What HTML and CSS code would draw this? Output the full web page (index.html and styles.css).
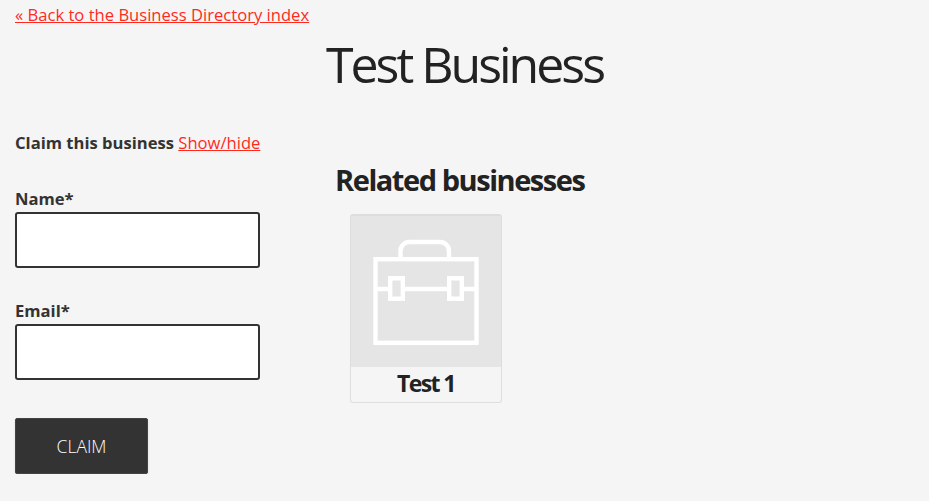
FILE: index.html
```html
<!DOCTYPE html>
<html lang="en">
<head>
    <meta charset="UTF-8">
    <meta name="viewport" content="width=device-width, initial-scale=1.0">
    <title>Test Business</title>
    <link rel="stylesheet" href="styles.css">
</head>
<body>
    <a class="back-link" href="#">« Back to the Business Directory index</a>
    <h1 class="title">Test Business</h1>

    <div class="layout">
        <div class="claim">
            <p class="claim-line"><strong>Claim this business</strong> <a href="#">Show/hide</a></p>
            <form>
                <label class="field-label" for="name">Name*</label>
                <input class="field-input" id="name" type="text">
                <label class="field-label" for="email">Email*</label>
                <input class="field-input" id="email" type="text">
                <button class="claim-button" type="button">CLAIM</button>
            </form>
        </div>

        <div class="related">
            <h2 class="related-title">Related businesses</h2>
            <div class="card">
                <div class="card-image">
                    <svg width="152" height="150" viewBox="0 0 152 150" fill="none" stroke="#fff" stroke-width="4.4">
                        <rect x="25.5" y="43.2" width="101" height="83.6"/>
                        <path d="M50.5 42V35a9 9 0 0 1 9-9h30.5a9 9 0 0 1 9 9v7"/>
                        <path d="M25 73h14M54 73h44M113 73h14"/>
                        <rect x="40.2" y="62.3" width="12.6" height="20.4"/>
                        <rect x="99.2" y="62.3" width="12.6" height="20.4"/>
                    </svg>
                </div>
                <div class="card-name">Test 1</div>
            </div>
        </div>
    </div>
</body>
</html>
```

FILE: styles.css
```css
body {
    margin: 0;
    padding: 4px 15px 0;
    background: #f5f5f5;
    color: #333;
    font-family: "Open Sans", sans-serif;
    font-size: 16.6px;
    line-height: 22px;
}

a {
    color: #ff2a1f;
}

.back-link {
    display: block;
}

.title {
    margin: 8px 0 0;
    color: #222;
    font-size: 50px;
    font-weight: 400;
    line-height: 60px;
    letter-spacing: -0.06em;
    text-align: center;
}

.layout {
    display: flex;
    margin-top: 38px;
}

.claim {
    width: 245px;
}

.claim-line {
    margin: 0 0 33px;
    white-space: nowrap;
}

.field-label {
    display: block;
    font-weight: 700;
    line-height: 24px;
    margin-bottom: 1px;
}

.field-input {
    display: block;
    box-sizing: border-box;
    width: 245px;
    height: 56px;
    margin-bottom: 31px;
    border: 2px solid #333;
    border-radius: 3px;
    background: #fff;
}

.claim-button {
    display: block;
    width: 133px;
    height: 56px;
    margin-top: 38px;
    border: 1px solid #444;
    border-radius: 2px;
    background: #333;
    color: #fff;
    font-family: "Open Sans", sans-serif;
    font-size: 17.5px;
    font-weight: 300;
    box-shadow: 0 1px 2px rgba(0,0,0,0.15);
}

.related {
    margin-left: 75px;
    padding-top: 30px;
}

.related-title {
    margin: 0;
    color: #222;
    font-size: 29px;
    font-weight: 700;
    line-height: 36px;
    letter-spacing: -0.05em;
}

.card {
    box-sizing: border-box;
    width: 152px;
    margin: 16px 0 0 15px;
    border: 1px solid #ddd;
    border-top-width: 2px;
    border-radius: 3px;
}

.card-image {
    height: 151px;
    background: #e5e5e5;
}

.card-image svg {
    display: block;
    margin-left: -1px;
}

.card-name {
    padding-bottom: 2px;
    color: #222;
    font-size: 23px;
    font-weight: 700;
    line-height: 33px;
    letter-spacing: -0.07em;
    text-align: center;
}
```
